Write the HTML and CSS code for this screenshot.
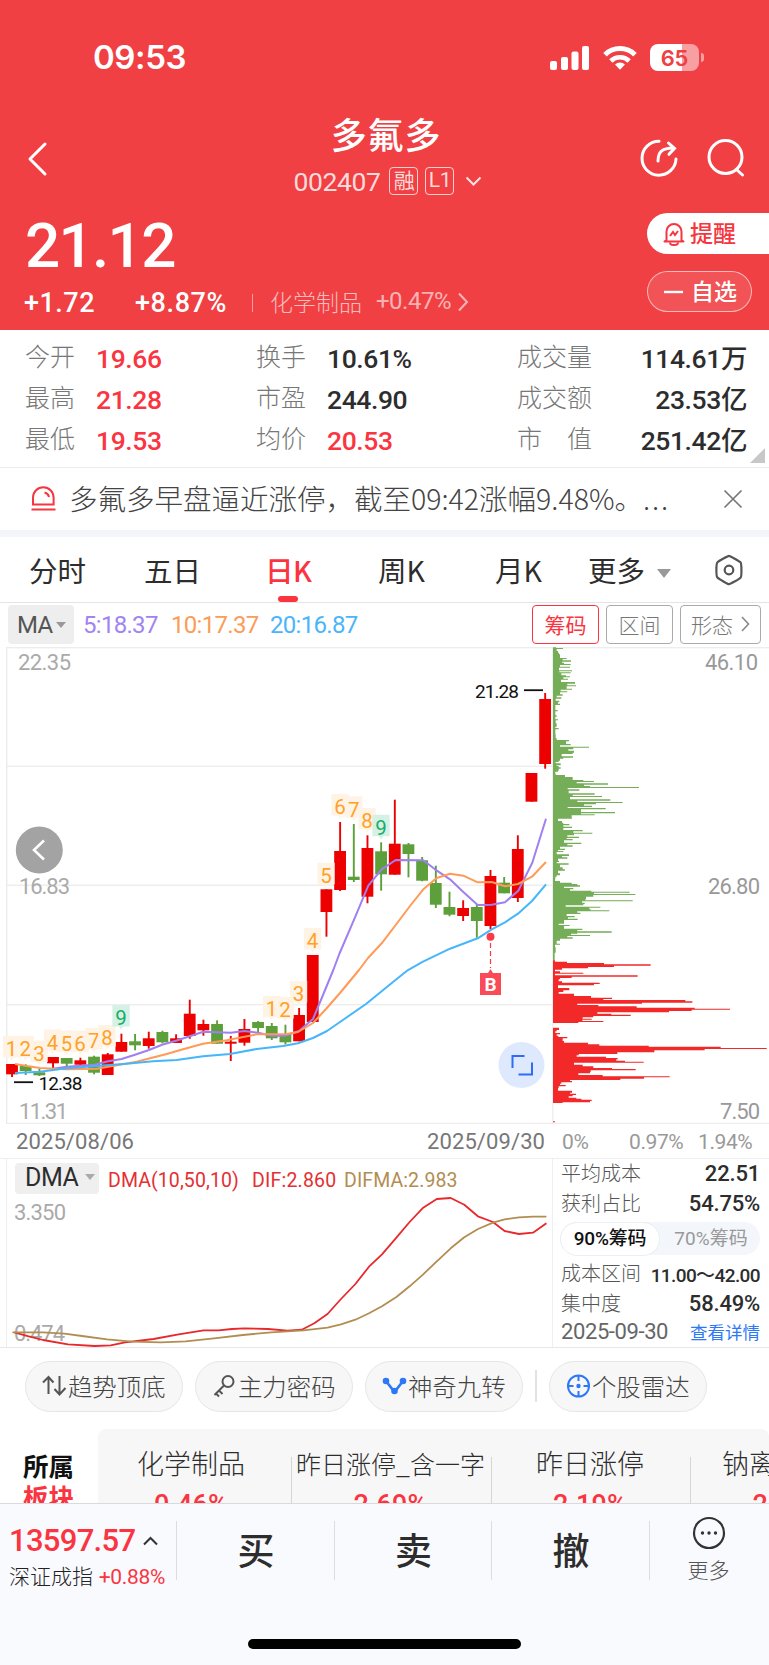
FILE: index.html
```html
<!DOCTYPE html>
<html lang="zh-CN">
<head>
<meta charset="utf-8">
<title>多氟多 002407</title>
<link rel="stylesheet" href="styles.css">
</head>
<body>
<main class="app">
  <header class="top">
    <div class="status">
      <span class="clock">09:53</span>
      <div class="status-icons">
        <svg class="signal" width="40" height="26" viewBox="0 0 40 26" fill="#fff"><rect x="0" y="16" width="7" height="9" rx="2"/><rect x="11" y="12" width="7" height="13" rx="2"/><rect x="21.500" y="6.500" width="7" height="18.500" rx="2"/><rect x="32" y="1" width="7" height="24" rx="2"/></svg>
        <svg class="wifi" width="34" height="26" viewBox="0 0 34 26" fill="none" stroke="#fff"><path d="M2 9.700a21.500 21.500 0 0 1 30 0" stroke-width="5"/><path d="M7.800 16a13.200 13.200 0 0 1 18.400 0" stroke-width="4.600"/><path d="M17 24.800l-5-5.200a7.300 7.300 0 0 1 10 0z" fill="#fff" stroke="none"/></svg>
        <span class="battery"><b>65</b></span><span class="nub"></span>
      </div>
    </div>
    <div class="nav">
      <svg class="back" width="24" height="36" viewBox="0 0 24 36" fill="none" stroke="#fff" stroke-width="3" stroke-linecap="round" stroke-linejoin="round"><path d="M19 3L4 18l15 15"/></svg>
      <div class="title">
        <h1>多氟多</h1>
        <div class="code"><span class="num">002407</span><i class="rong">融</i><i class="num">L1</i><svg width="17" height="11" viewBox="0 0 17 11" fill="none" stroke="#fff" stroke-opacity=".85" stroke-width="2"><path d="M1.500 1.500l7 7 7-7"/></svg></div>
      </div>
      <div class="nav-right">
        <svg width="40" height="40" viewBox="0 0 40 40" fill="none" stroke="#fff" stroke-width="3" stroke-linecap="round"><path d="M20 3.200a17 17 0 1 0 17 17.800"/><path d="M19 23c0-9 4-13 15-13"/><path d="M29.500 5l6 5.300-5.500 6"/></svg>
        <svg width="40" height="40" viewBox="0 0 40 40" fill="none" stroke="#fff" stroke-width="3" stroke-linecap="round"><circle cx="19.500" cy="19" r="16.500"/><path d="M31 32l5.500 5"/></svg>
      </div>
    </div>
    <div class="quote">
      <div class="price num">21.12</div>
      <div class="change num">
        <b>+1.72</b><b class="pct">+8.87%</b><span class="bar"></span><span class="ind">化学制品</span><span class="indp">+0.47%</span>
        <svg width="12" height="20" viewBox="0 0 12 20" fill="none" stroke="#fff" stroke-opacity=".62" stroke-width="2"><path d="M2 1.500l8 8.500-8 8.500"/></svg>
      </div>
      <div class="side">
        <div class="alert"><svg width="22" height="24" viewBox="0 0 22 24" fill="none" stroke="#f5363f" stroke-width="2"><path d="M3.500 18V9.500a7.500 7.500 0 0 1 15 0V18l2 1.500H1.500z" stroke-linejoin="round"/><path d="M7 20.500a4 2.500 0 0 0 8 0"/><path d="M7 14l3-4 2 3 3-4"/></svg><span>提醒</span></div>
        <div class="fav"><svg width="19" height="4" viewBox="0 0 19 4"><path d="M0 2h19" stroke="#fff" stroke-width="2.400"/></svg><span>自选</span></div>
      </div>
    </div>
  </header>

  <section class="stats">
    <span>今开</span><b class="up">19.66</b><span>换手</span><b>10.61%</b><span>成交量</span><b class="r">114.61万</b>
    <span>最高</span><b class="up">21.28</b><span>市盈</span><b>244.90</b><span>成交额</span><b class="r">23.53亿</b>
    <span>最低</span><b class="up">19.53</b><span>均价</span><b class="up">20.53</b><span>市　值</span><b class="r">251.42亿</b>
    <em class="corner"></em>
  </section>

  <section class="notice">
    <svg width="25" height="26" viewBox="0 0 25 26" fill="none" stroke="#f5363f" stroke-width="2"><path d="M2 18.500V11.500a10.300 10.300 0 0 1 20.600 0v7z"/><path d="M0.500 23.500h24M13.500 6.500c2.500.5 4 2 4.500 4.500"/></svg>
    <p>多氟多早盘逼近涨停，截至09:42涨幅9.48%。<span>...</span></p>
    <svg width="20" height="20" viewBox="0 0 20 20" stroke="#777" stroke-width="1.700"><path d="M1.500 1.500l17 17M18.500 1.500l-17 17"/></svg>
  </section>

  <nav class="tabs">
    <span>分时</span><span>五日</span><span class="on">日K</span><span>周K</span><span>月K</span><span class="more">更多<i></i></span>
    <svg width="30" height="32" viewBox="0 0 30 32" fill="none" stroke="#555" stroke-width="2.200" stroke-linejoin="round"><path d="M15 1.800c1 0 10.500 5.500 11.500 6.500s1.500 14 0 15.500S16 30.200 15 30.200 5 25 3.500 23.700s-1.500-14 0-15.400S14 1.800 15 1.800z"/><circle cx="15" cy="16" r="4.300"/></svg>
  </nav>

  <section class="tools num">
    <span class="ma">MA<i></i></span><span class="m5">5:18.37</span><span class="m10">10:17.37</span><span class="m20">20:16.87</span>
    <div class="btns"><span class="act">筹码</span><span>区间</span><span>形态<svg width="9" height="16" viewBox="0 0 9 16" fill="none" stroke="#888" stroke-width="1.600"><path d="M1 1l6.500 7L1 15"/></svg></span></div>
  </section>

  <svg class="kchart" id="kchart" width="769" height="477" viewBox="0 647 769 477"></svg>

  <section class="axis num"><span class="d1">2025/08/06</span><span class="d2">2025/09/30</span><span class="p0">0%</span><span class="p1">0.97%</span><span class="p2">1.94%</span></section>

  <section class="lower">
    <div class="dma">
      <div class="dma-head num"><span class="sel">DMA<i></i></span><span class="a">DMA(10,50,10)</span><span class="b">DIF:2.860</span><span class="c">DIFMA:2.983</span></div>
      <svg width="546" height="153" viewBox="7 1194 546 153" fill="none" stroke-width="1.800" stroke-linejoin="round">
        <g class="lbl"><text x="14" y="1219.500" textLength="52">3.350</text><text x="14" y="1340.500" textLength="51">0.474</text></g>
        <polyline stroke="#e8282b" points="14.3,1332.3 28.6,1336.3 43,1340 68,1344.3 94.6,1346 110.700,1345.3 125,1342.3 153.600,1339 178.600,1334.3 203.600,1330.3 218.600,1330.3 232,1329 244.600,1328.3 268,1329 287.500,1330.7 301.800,1329.7 314.3,1323.3 327.500,1314 341,1299 355.400,1284 369,1266.7 382,1254.3 396.400,1237.7 409.600,1222 423.200,1207.7 436.800,1199 450.700,1198 464.300,1204.7 477.900,1216.3 492.900,1222 504.600,1231 519,1234 533,1232.7 546.400,1223.3"/>
        <polyline stroke="#b28d52" points="12.500,1332.3 43,1332.3 64.300,1333.7 82,1336 107,1339.3 132,1341.7 160.700,1342.3 185.700,1341.3 214,1338.3 243,1335 271.400,1332.3 303.600,1330.3 327.500,1327.7 341,1324.3 355.400,1319.7 369,1313.3 382,1306.3 396.400,1297 409.600,1286.3 423.200,1274.3 436.800,1261.3 450.700,1248.3 464.300,1237.3 478,1229 493,1222.7 504.600,1219.3 519,1217.3 533,1216.7 546.400,1216.7"/>
      </svg>
    </div>
    <div class="cost">
      <p><span>平均成本</span><b>22.51</b></p>
      <p><span>获利占比</span><b>54.75%</b></p>
      <div class="seg"><b>90%筹码</b><span>70%筹码</span></div>
      <p><span>成本区间</span><b class="rng">11.00～42.00</b></p>
      <p><span>集中度</span><b>58.49%</b></p>
      <p><span class="date num">2025-09-30</span><a>查看详情</a></p>
    </div>
  </section>

  <section class="chips">
    <span><svg width="25" height="24" viewBox="0 0 25 24" fill="none" stroke="#555" stroke-width="2"><path d="M6.500 20V3M1 8.500L6.500 3l5 5.500M17.500 2v18M12.500 15l5 5.500 6-6.500"/></svg>趋势顶底</span>
    <span><svg width="25" height="24" viewBox="0 0 25 24" fill="none" stroke="#555" stroke-width="2"><circle cx="16" cy="7.500" r="5.500"/><path d="M12 11.500L2.500 21M7 16.500l3.500 3.500M4 19.500l3 3"/></svg>主力密码</span>
    <span><svg width="25" height="24" viewBox="0 0 25 24" fill="#2d78f6" stroke="#2d78f6" stroke-width="2.600"><path d="M4 7l8.500 11L21 7" fill="none"/><circle cx="4" cy="7" r="2"/><circle cx="21" cy="7" r="2"/><circle cx="12.500" cy="17" r="2"/></svg>神奇九转</span>
    <em></em>
    <span><svg width="25" height="24" viewBox="0 0 25 24" fill="none" stroke="#2d78f6" stroke-width="2"><circle cx="12.500" cy="12" r="10.500"/><path d="M12.500 1v6M12.500 17v6M1.500 12h6M17.500 12h6"/><circle cx="12.500" cy="12" r="1.200" fill="#2d78f6"/></svg>个股雷达</span>
  </section>

  <section class="sector">
    <div class="sec-title"><b>所属</b><b class="up">板块</b></div>
    <div class="cards">
      <div><span>化学制品</span><b>0.46%</b></div>
      <div><span class="sm">昨日涨停_含一字</span><b>2.69%</b></div>
      <div><span>昨日涨停</span><b>2.19%</b></div>
      <div><span>钠离子电池</span><b>2.36%</b></div>
    </div>
  </section>

  <footer class="bottom">
    <div class="bar-row">
      <div class="index"><div class="iv num">13597.57<svg width="15" height="10" viewBox="0 0 15 10" fill="none" stroke="#333" stroke-width="2"><path d="M1 8.500L7.500 2 14 8.500"/></svg></div><div class="in">深证成指 <span class="num">+0.88%</span></div></div>
      <div class="act-b">买</div><div class="act-b">卖</div><div class="act-b">撤</div>
      <div class="more-b"><svg width="34" height="34" viewBox="0 0 34 34" fill="#333"><circle cx="17" cy="17" r="15" fill="none" stroke="#333" stroke-width="2.200"/><circle cx="10.500" cy="17" r="1.700"/><circle cx="17" cy="17" r="1.700"/><circle cx="23.500" cy="17" r="1.700"/></svg>更多</div>
    </div>
    <div class="home"></div>
  </footer>
</main>
<script src="chart.js"></script>
</body>
</html>
```
FILE: styles.css
```css
* { box-sizing: border-box; }
body { margin: 0; background: #fff; }
h1, p { margin: 0; font-weight: inherit; }
i, em { font-style: normal; }
.app { width: 769px; height: 1665px; overflow: hidden; display: flex; flex-direction: column; font-family: "Noto Sans CJK SC", sans-serif; color: #2d2d2d; white-space: nowrap; }
.app > * { flex: none; }
svg { display: block; flex: none; }
.num, .stats b, .cost b { font-family: Roboto, "Noto Sans CJK SC", sans-serif; }
.up { color: #fa3541 !important; }

.top { height: 330px; background: #f04043; color: #fff; }
.status { height: 115px; display: flex; justify-content: space-between; align-items: center; padding: 0 65px 0 93px; }
.clock { font: 600 33px/40px Inter, sans-serif; letter-spacing: -.4px; padding-bottom: 1px; }
.status-icons { display: flex; align-items: center; }
.wifi { margin-left: 13px; }
.battery { margin-left: 13px; width: 49px; height: 27px; border-radius: 8px; background: linear-gradient(90deg, #fff 66%, #f8a0a1 66%); color: #f04043; font: 22px/28px Inter, sans-serif; text-align: center; letter-spacing: -.3px; }
.battery b { font-weight: 600; }
.nub { width: 3px; height: 9px; margin-left: 2px; border-radius: 0 3px 3px 0; background: #f8a0a1; }
.nav { height: 90px; display: grid; grid-template-columns: 100px 1fr 100px; padding: 0 24px 0 26px; }
.back { margin-top: 26px; }
.title { display: flex; flex-direction: column; align-items: center; }
.title h1 { height: 42px; font-size: 36px; font-weight: 500; line-height: 36px; letter-spacing: .9px; padding-left: 1px; }
.code { display: flex; align-items: center; height: 48px; margin-left: 5px; color: rgba(255,255,255,.82); font-size: 26.5px; letter-spacing: -.4px; }
.code i { width: 29px; height: 28px; margin-left: 9px; border: 1.5px solid rgba(255,255,255,.75); border-radius: 4px; font-size: 21px; line-height: 24px; text-align: center; }
.code i.rong { line-height: 23px; }
.code .rong + i { margin-left: 7px; }
.code svg { margin-left: 11px; }
.nav-right { display: flex; gap: 27px; margin: 23px 0 0 -6px; }
.quote { height: 125px; display: grid; grid-template: 78px 47px / 1fr 122px; }
.price { padding-left: 25px; font-weight: 500; font-size: 62px; line-height: 81px; letter-spacing: -1.7px; }
.change { display: flex; align-items: center; padding: 0 0 8px 24px; height: 47px; font-size: 27px; }
.change b { font-weight: 500; width: 111px; letter-spacing: .5px; }
.change b.pct { width: 117px; letter-spacing: .6px; }
.bar { width: 1px; height: 18px; background: rgba(255,255,255,.5); }
.ind { margin: -4px 0 0 17px; width: 106px; font: 300 23px/34px "Noto Sans CJK SC", sans-serif; color: rgba(255,255,255,.66); }
.indp { width: 81px; margin-top: -3px; font-size: 24px; color: rgba(255,255,255,.62); letter-spacing: -.5px; }
.change svg { margin-top: -2px; }
.side { grid-column: 2; grid-row: 1 / 3; padding-top: 8px; }
.alert, .fav { display: flex; align-items: center; height: 41px; font-size: 23px; font-weight: 500; }
.alert span, .fav span { padding-bottom: 3px; }
.alert { gap: 5px; padding-left: 16px; background: #fff; color: #f5363f; border-radius: 21px 0 0 21px; }
.fav { gap: 8px; width: 105px; margin-top: 17px; padding-left: 16px; border: 1px solid rgba(255,255,255,.6); border-radius: 21px; background: rgba(255,255,255,.1); }

.stats { position: relative; height: 138px; padding: 7px 22px 7px 25px; border-bottom: 1.5px solid #ececec; display: grid; grid-template-columns: 71px 160px 71px 190px 79px 1fr; grid-auto-rows: 41px; line-height: 41px; font-size: 25px; }
.stats span { font-weight: 300; color: #777; margin-top: -2px; }
.stats b { font-weight: 500; font-size: 26.5px; letter-spacing: -.4px; padding-top: 1px; }
.stats .r { text-align: right; }
.corner { position: absolute; right: 4px; bottom: 4px; border-left: 15px solid transparent; border-bottom: 15px solid #c8c8c8; }

.notice { height: 62px; display: flex; align-items: center; padding: 0 26px 0 31px; font-weight: 300; font-size: 28.5px; color: #444; }
.notice p { margin: -3px 0 0 13px; flex: 1; }
.notice p span { letter-spacing: 1.8px; }
.tabs { height: 73px; border-top: 7px solid #f3f5fa; border-bottom: 1.5px solid #e4e4e4; display: grid; grid-template-columns: 115px 121px 113px 117px 93px 126px 30px; padding-left: 29px; align-items: center; font-size: 28.5px; line-height: 63px; }
.tabs span { padding-bottom: 1px; }
.tabs .on { color: #fa3541; font-weight: 500; position: relative; letter-spacing: -.6px; }
.tabs .on::after { content: ""; position: absolute; left: 13px; bottom: 0; width: 20px; height: 6px; border-radius: 3px; background: #fa3541; }
.tabs i, .ma i, .sel i { display: inline-block; border: 7px solid transparent; border-bottom: 0; border-top: 9px solid #999; vertical-align: middle; margin-left: 12px; }

.tools { height: 44px; display: flex; align-items: flex-start; padding: 2px 8px; font-size: 24px; line-height: 41px; }
.tools > span { white-space: nowrap; letter-spacing: -.7px; }
.ma { width: 66px; height: 39px; border-radius: 4px; background: #eee; padding-left: 9px; color: #555; }
.ma i { border-width: 6px 5px 0; margin: -4px 0 0 4px; }
.tools .m5 { margin-left: 9px; width: 88px; color: #a184f2; }
.tools .m10 { width: 99px; color: #fb9c58; }
.tools .m20 { color: #4bb5fa; }
.btns { margin-left: auto; display: flex; gap: 7px; font: 300 21px/36px "Noto Sans CJK SC", sans-serif; color: #777; }
.btns span { width: 67px; height: 39px; padding-bottom: 2px; border: 1.5px solid #aaa; border-radius: 4px; display: flex; justify-content: center; gap: 8px; align-items: center; }
.btns span:last-child { width: 81px; }
.btns .act { color: #fa3541; border-color: #fa3541; font-weight: 400; }

text { font-family: Roboto, sans-serif; stroke: none; }
.lbl { fill: #aaa; font-size: 22px; }
.tag { fill: #ffa126; font-size: 20.5px; text-anchor: middle; }
.tag.g { fill: #16ad68; }
.mark { fill: #111; font-size: 19px; }

.axis { height: 35px; display: grid; grid-template-columns: 411px 135px 67px 69px 1fr; padding-left: 16px; line-height: 36px; font-size: 22px; color: #777; border-bottom: 1.5px solid #eee; letter-spacing: .1px; }
.axis .p0, .axis .p1, .axis .p2 { color: #999; font-size: 21px; letter-spacing: -.4px; }

.lower { height: 189px; display: grid; grid-template-columns: 547px 1fr; padding-left: 6px; border-bottom: 1.5px solid #e8e8e8; }
.dma { border-left: 1.5px solid #eee; border-right: 1.5px solid #eee; }
.dma-head { display: flex; align-items: center; height: 35px; padding: 4px 0 0 8px; font-size: 19.5px; }
.dma-head .a, .dma-head .b, .dma-head .c { padding-top: 3px; }
.sel { width: 84px; height: 31px; background: #efefef; border-radius: 4px; font-size: 25px; line-height: 30px; padding-left: 10px; letter-spacing: -.5px; }
.sel i { border-width: 6px 5px 0; border-top-color: #aaa; margin: -4px 0 0 7px; }
.dma-head .a { width: 144px; margin-left: 9px; color: #e52f32; letter-spacing: .1px; }
.dma-head .b { width: 92px; color: #e52f32; letter-spacing: .2px; }
.dma-head .c { color: #b28d52; letter-spacing: .1px; }
.cost { padding: 0 9px 0 8px; margin-top: -2px; font-size: 20px; }
.cost p { display: flex; justify-content: space-between; align-items: center; height: 30px; }
.cost span { color: #555; font-weight: 300; }
.cost b { font-size: 22px; font-weight: 500; padding-top: 3px; letter-spacing: -.2px; }
.cost b.rng { font-size: 19px; letter-spacing: -.6px; }
.cost .date { font-size: 22px; font-weight: 400; letter-spacing: -.4px; color: #666; }
.cost a { font-size: 17.5px; color: #2d78f6; }
.cost p:last-child { height: 29px; }
.seg { margin: 5px 0 2px -1px; height: 33px; border-radius: 17px; background: #f3f6fa; display: grid; grid-template-columns: 100px 1fr; line-height: 31px; text-align: center; }
.seg b { font-size: 19px; font-weight: 500; color: #111; background: #fff; border: 1.500px solid #e9eff6; border-radius: 17px; padding: 0; }
.seg span { font-family: Roboto, "Noto Sans CJK SC", sans-serif; font-size: 19px; font-weight: 400; color: #999; line-height: 34px; padding-left: 2px; }

.chips { height: 81px; padding: 13px 25px 0; display: flex; gap: 12.500px; }
.chips span { width: 157.500px; height: 51px; border: 1px solid #e6e6e6; border-radius: 26px; background: #f7f7f7; display: flex; align-items: center; justify-content: center; gap: 1px; font-size: 24.4px; font-weight: 300; color: #444; padding-bottom: 2px; }
.chips em { width: 1.500px; height: 32px; margin: 9px 0; background: #e2e2e2; }

.sector { height: 74px; display: grid; grid-template-columns: 98px 671px; overflow: hidden; }
.sec-title { padding: 20px 0 0 23px; font-size: 25.500px; line-height: 31px; font-weight: 700; color: #111; }
.sec-title b { display: block; font-weight: 700; height: 31px; }
.cards { background: #f7f7f7; border-radius: 8px 8px 0 0; display: grid; grid-template-columns: 194px 200px 199px 200px; height: 74px; overflow: hidden; }
.cards div { display: flex; flex-direction: column; align-items: center; padding-top: 11px; background: linear-gradient(#d5d5d5, #d5d5d5) right 28px / 1.500px 60px no-repeat; }
.cards div:first-child { padding-right: 8px; }
.cards div:nth-child(n+2) { padding-right: 3px; }
.cards span { font-size: 27px; font-weight: 300; line-height: 46px; height: 49px; }
.cards .sm { font-size: 25px; }
.cards b { font: 500 27px/32px Roboto, sans-serif; color: #fa3541; letter-spacing: .1px; }

.bottom { height: 162px; background: #f9fafe; border-top: 1.500px solid #d9dadd; }
.bar-row { height: 92px; display: grid; grid-template-columns: 177px 158px 157px 158px 117px; }
.bar-row > div { background: linear-gradient(#dcdde0, #dcdde0) right 17px / 1px 59px no-repeat; }
.bar-row > .more-b { background: none; }
.index { padding: 18px 0 0 9px; }
.iv { display: flex; gap: 8px; align-items: center; font-size: 31px; line-height: 38px; color: #fa3541; font-weight: 500; letter-spacing: -.7px; }
.in { font-size: 21px; line-height: 30px; font-weight: 300; color: #222; }
.in span { color: #fa3541; font-weight: 400; letter-spacing: -.3px; padding-left: 1px; }
.act-b { text-align: center; font-size: 37px; font-weight: 500; line-height: 91px; }
.more-b { display: flex; flex-direction: column; align-items: center; padding-top: 12px; font-size: 21px; font-weight: 300; line-height: 38px; color: #555; }
.home { width: 273px; height: 10px; margin: 43px auto 0; border-radius: 5px; background: #000; }
```
FILE: chart.js
```js
const svg = document.getElementById('kchart');
const RED = '#ec0000', GREEN = '#5d9f3a';
let out = '';
const rect = (x, y, w, h, fill, extra = '') => { out += `<rect x="${x}" y="${y}" width="${w}" height="${h}" fill="${fill}" ${extra}/>`; };
const text = (cls, x, y, s, extra = '') => { out += `<text class="${cls}" x="${x}" y="${y}" ${extra}>${s}</text>`; };

// grid
[647, 765.5, 884.5, 1004, 1122.8].forEach((y, i) => rect(6, y, i === 0 || i === 4 ? 763 : 547, 1.4, '#ededed'));
rect(6, 647, 1.4, 477, '#ececec');
rect(552.2, 647, 1.2, 477, '#ececec');

// axis labels
text('lbl', 18, 670, '22.35', 'textLength="53"');
text('lbl', 19, 894, '16.83', 'textLength="51"');
text('lbl', 19, 1119, '11.31', 'textLength="49"');

// candles: colour, high, top, bottom, low
const candles = [
  ['r',1064,1064,1074.3,1077],['g',1064.3,1066,1071,1075],['g',1069,1072.3,1075.3,1076],['r',1057,1057,1063.3,1068],
  ['g',1058,1058,1063.7,1069],['r',1057.7,1060.3,1064.7,1065],['g',1055.7,1056.7,1072.7,1074.3],['r',1053,1054.3,1075,1075],
  ['r',1033.7,1042,1051.7,1051.7],['g',1034,1041.3,1045.3,1050.3],['r',1031.7,1038.3,1046,1048.7],['g',1030.7,1032,1042.3,1043.3],
  ['r',1034.3,1038.3,1043,1043],['r',999.7,1013.7,1036,1038.7],['r',1019.7,1024,1030.3,1035.7],['g',1020.3,1024,1043.7,1043.7],
  ['r',1036,1041.7,1043.7,1061],['r',1019,1029,1042.7,1045.7],['g',1021,1022,1028,1032],['g',1023,1026,1038.3,1040],
  ['g',1024.7,1035,1042.3,1044.3],['r',1008,1015,1041.3,1041.3],['r',955,955,1022,1022],['r',889.3,889.3,912,936.7],
  ['r',822,851,890,891],['g',824,876.7,880,882],['r',835.3,848,896.7,903.3],['g',842.3,851.3,874.3,890.7],
  ['r',799.7,843.7,874.7,874.7],['g',843,844.3,854,877.3],['g',857,860.3,880.7,881.3],['g',865.7,883,904.7,908],
  ['g',891.7,907,914.7,916.3],['r',900.3,908,916,921],['g',904,907,921,937.7],['r',870,876,926,929],
  ['g',877,882.7,893.3,893.3],['r',835.3,849,898,902],['r',773,773,801.7,801.7],['r',693,699,764,768.7]
];
candles.forEach(([c, hi, top, bot, lo], i) => {
  const x = 12 + 13.67 * i, f = c === 'r' ? RED : GREEN;
  rect(x - 0.9, hi, 1.9, lo - hi, f);
  rect(x - 5.9, top, 11.8, bot - top, f);
});

// moving averages
const line = (pts, stroke) => { out += `<polyline points="${pts}" fill="none" stroke="${stroke}" stroke-width="2" stroke-linejoin="round"/>`; };
line('53,1068.7 66.7,1066.7 94.7,1064.7 108,1061.3 121.6,1059 135,1054.7 149,1050 162,1044.7 176,1040.7 189.7,1036.3 203.3,1031.7 217,1032.3 230.7,1032.7 244.3,1031 258,1032.7 271.6,1035.7 285,1035.7 299,1031 313,1019 323,995 333.3,970 339.3,954 355,917.3 368.3,885.7 381.7,869.3 395.7,860 423.3,860.3 435,869.3 450,879.3 463.3,892 477.7,905 491.7,904.7 505,902.3 518.3,890.7 532.3,862.7 546,818.7', '#a07ff0');
line('15,1064 26.7,1066 40,1068 53.3,1068.7 66.7,1069.3 96.7,1068.7 116.7,1065.3 136.7,1061.7 150,1058.3 166.7,1054 183,1049.3 203,1043.7 226.7,1040.3 256.7,1034.3 286.7,1034 298,1032 313,1023 326,1009 340,993 359,970 368,958 381.7,943.3 395.7,925 410,906 423.3,889.3 436.7,878 450,873.7 463.3,875.7 477.7,882.3 491.7,882 505,886.3 518,884 532,876.7 546,862', '#ff9a57');
line('15,1073 40,1071.7 66.7,1068.3 96.7,1066 126.7,1063.7 153,1061.3 176.7,1060 203,1056.3 230,1054 256.7,1049 283,1046 298,1043.3 313,1038 327,1031 340,1022 366,1004 393,982 408,970 423,961.7 450,948.7 477.7,938.3 491.7,929.3 505,922.3 518,913.7 532,901 546,884.3', '#46b6fb');

// nine-turn sequence tags
[[1,11.5,1049],[2,25.3,1049],[3,39,1053.5],[4,52.6,1042.5],[5,66.6,1043.5],[6,80,1043.5],[7,93.7,1041],[8,107,1038],[9,121,1018],
 [1,271.5,1008.7],[2,285,1010],[3,298.5,994],[4,312.5,941],[5,326,875.7],[6,340,807],[7,353.7,809.3],[8,367,821],[9,381,827.7]
].forEach(([n, x, y]) => {
  const g = n === 9;
  out += `<path d="M${x - 8.6} ${y - 13}h17.3v21.500h-6.300l-2.300 3-2.300-3h-6.400z" fill="${g ? '#d5f1e5' : '#fff3e6'}"/>`;
  text(g ? 'tag g' : 'tag', x, y + 7.3, n);
});

// price extremes
text('mark', 475, 697.5, '21.28', 'textLength="44"');
rect(524, 689.3, 19, 1.8, '#111');
rect(14, 1081.3, 19, 1.8, '#111');
text('mark', 38.5, 1090, '12.38', 'textLength="44"');

// buy marker
out += '<circle cx="490.500" cy="936.700" r="4" fill="#fb3a48"/><path d="M490.500 943v25" stroke="#fb3a48" stroke-width="1.200" stroke-dasharray="5 3"/>';
out += '<path d="M480 973h8l2.500-4 2.500 4h8v22h-21z" fill="#fa4957"/>';
text('', 490.5, 990.5, 'B', 'font-size="19" font-weight="700" style="fill:#fff" text-anchor="middle"');

// chip distribution: start row, bar end, both in thirds of a pixel
const upper = '24 48,26 69,29 50,35 54,40 57,45 60,56 80,59 68,63 93,67 66,70 72,74 92,77 60,82 90,85 57,93 96,96 58,99 92,102 64,108 78,111 90,114 70,118 84,121 63,128 105,133 82,138 108,141 80,148 96,151 62,156 82,159 60,165 68,169 50,174 64,178 47,184 58,188 54,193 60,197 46,212 53,216 46,228 50,232 46,240 54,243 47,252 50,262 46,266 56,270 46,285 47,297 50,302 87,306 78,314 92,318 60,322 147,325 100,330 85,334 102,340 98,344 65,351 99,355 70,358 60,364 56,368 47,372 62,378 50,380 56,384 62,388 56,394 54,397 46,404 47,407 75,413 98,422 130,425 162,428 110,432 204,436 132,440 150,443 297,446 83,450 118,454 86,462 164,466 98,470 186,473 90,480 211,484 112,488 248,491 168,495 132,499 156,503 83,506 197,510 123,518 225,522 123,525 164,528 95,535 96,538 54,545 66,550 70,554 88,558 70,562 96,566 70,572 128,576 100,580 157,583 102,588 82,592 117,596 80,599 98,603 72,610 124,614 82,618 98,622 60,628 75,632 54,635 70,638 50,645 87,650 66,654 82,658 54,664 57,668 50,672 86,676 60,684 68,690 75,694 54,702 60,708 50,712 46,720 45,725 60,730 95,734 112,738 120,742 72,746 100,750 90,754 154,757 269,760 162,764 286,767 160,772 138,780 136,783 278,786 126,790 134,794 130,798 77,802 181,805 148,810 152,813 208,816 112,820 121,824 80,830 104,834 84,838 113,842 72,853 56,857 89,860 72,868 127,872 112,876 215,880 112,883 93,887 150,890 82,894 98,898 60,904 50,913 60,916 45,924 47,940 44,963 39';
const lower = '963 45,967 81,971 192,975 332,979 222,983 144,987 66,991 45,996 60,1000 130,1003 45,1008 293,1012 95,1016 60,1020 56,1026 66,1030 179,1034 162,1038 54,1046 88,1053 70,1058 56,1063 102,1070 153,1075 216,1079 190,1082 436,1086 457,1090 306,1093 112,1097 175,1101 290,1105 464,1108 570,1111 455,1115 387,1119 172,1123 214,1126 272,1130 160,1134 128,1138 155,1141 127,1145 190,1148 115,1151 39,1165 57,1172 50,1176 46,1181 60,1185 50,1189 55,1193 82,1197 68,1205 72,1210 144,1215 178,1219 326,1222 542,1226 680,1229 494,1233 343,1239 232,1244 116,1248 110,1252 198,1256 233,1260 229,1264 255,1267 311,1270 102,1276 128,1281 160,1286 216,1289 287,1293 152,1298 150,1302 115,1307 188,1311 389,1314 312,1318 241,1322 90,1325 96,1329 64,1333 60,1337 77,1341 56,1347 54,1354 96,1360 90,1363 108,1367 98,1371 86,1375 109,1378 124,1381 155,1385 150,1389 68,1391 39,1446 45,1449 39';
const chips = (data, fill) => {
  const rows = data.split(',').map(s => s.split(' ').map(Number));
  let d = `M553 ${640 + (rows[0][0] - 2) / 3}`;
  rows.forEach(([y, x]) => { d += `V${(640 + (y - 2) / 3).toFixed(2)}H${(540 + x / 3).toFixed(2)}`; });
  out += `<path d="${d}H553z" fill="${fill}"/>`;
};
chips(upper, '#76ad58');
chips(lower, '#f32828');

out += '<g style="fill:#999">';
[[758, 670, '46.10', 53], [760, 894, '26.80', 52], [760, 1119, '7.50', 40]].forEach(([r, y, s, w]) =>
  text('', r - w, y, s, `font-size="22" textLength="${w}"`));
out += '</g>';

// floating buttons
out += '<circle cx="39.300" cy="850" r="23.500" fill="#a3a3a3"/><path d="M44 840.500l-10 9.500 10 9.500" fill="none" stroke="#fff" stroke-width="2.600"/>';
out += '<circle cx="521.500" cy="1065" r="23" fill="#dfe9fe"/><path d="M512.500 1068v-12h12M518.500 1074.500h13.500v-12" fill="none" stroke="#2d6cf6" stroke-width="2"/>';
svg.innerHTML = out;
```
